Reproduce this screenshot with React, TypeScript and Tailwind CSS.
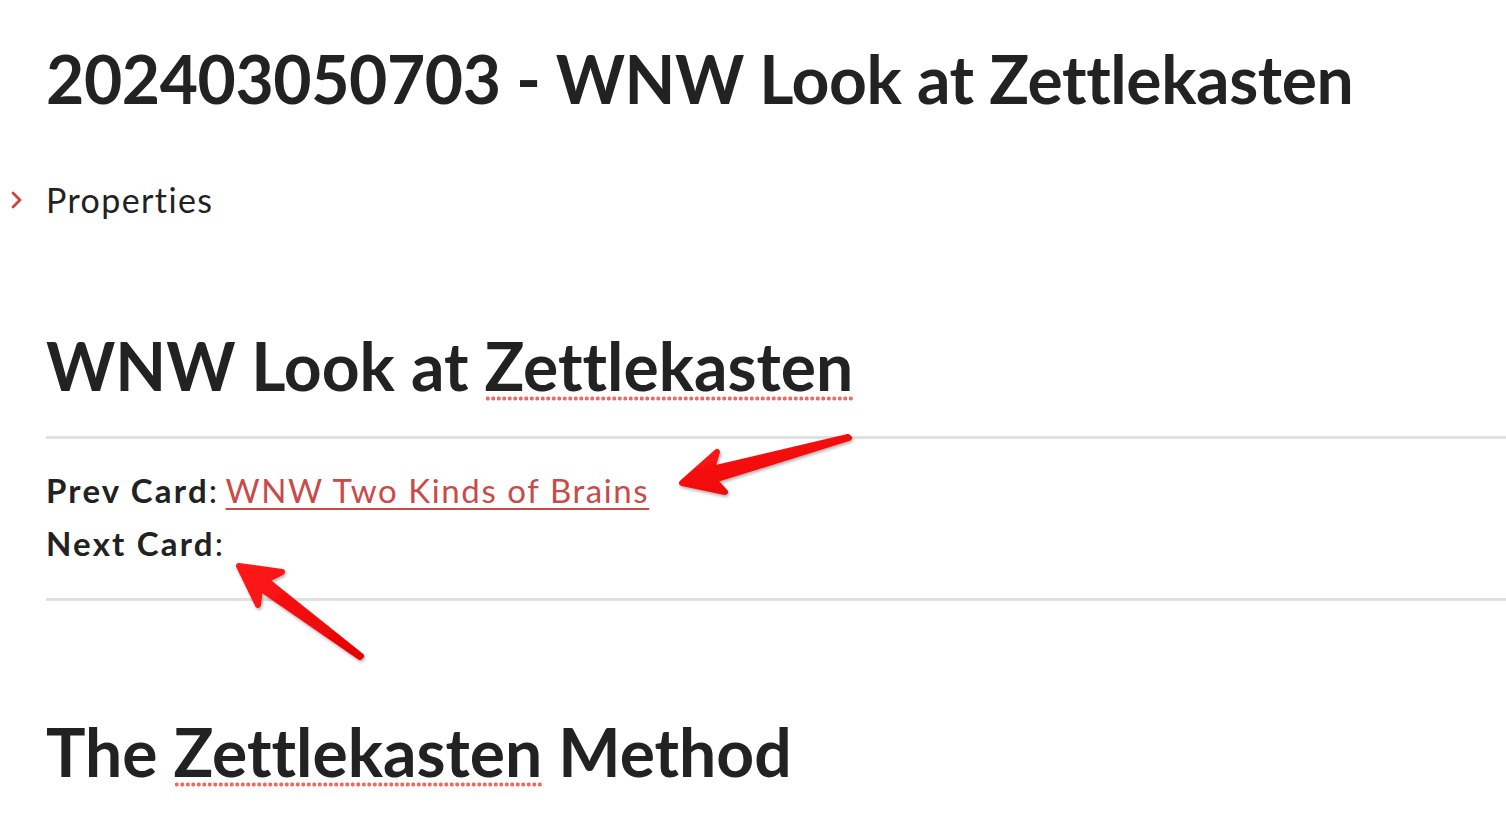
import React from "react";

const FONT = "font-['Lato','Noto_Sans',sans-serif] [font-variant-ligatures:none]";

function Arrow({ points }: { points: string }) {
  return (
    <polygon
      points={points}
      fill="url(#arrowFill)"
      stroke="url(#arrowFill)"
      strokeWidth={6}
      strokeLinejoin="round"
      filter="url(#arrowShadow)"
    />
  );
}

function Annotations() {
  return (
    <svg
      className="pointer-events-none absolute left-0 top-0"
      width={1506}
      height={834}
      viewBox="0 0 1506 834"
    >
      <defs>
        <linearGradient id="arrowFill" x1="0" y1="0" x2="1" y2="1">
          <stop offset="0" stopColor="#ff1a1a" />
          <stop offset="1" stopColor="#e60000" />
        </linearGradient>
        <filter id="arrowShadow" x="-20%" y="-20%" width="140%" height="140%">
          <feDropShadow dx="1" dy="2" stdDeviation="1.5" floodColor="#000" floodOpacity="0.3" />
        </filter>
      </defs>
      {/* arrow pointing at the prev card link */}
      <Arrow points="682,483 717,452 712,469 848,437 849,438 714,480 725,492" />
      {/* arrow pointing at next card */}
      <Arrow points="239,566 282,572 266,580 361,656 360,657 260,588 258,605" />
    </svg>
  );
}

// spellcheck squiggle, drawn as a row of dots under the word
function Misspelled({ children }: { children: React.ReactNode }) {
  return (
    <span className="relative inline-block">
      {children}
      <span className="absolute left-0 right-0 top-[70px] h-[5px] bg-[radial-gradient(circle,#f2675f_1.8px,transparent_2.3px)] bg-[length:5.5px_5px] bg-repeat-x" />
    </span>
  );
}

export default function App() {
  return (
    <div className={`relative h-[834px] w-[1506px] overflow-hidden bg-white text-[#222222] ${FONT}`}>
      <div className="pl-[46px] pt-[39px]">
        <h1 className="text-[66px] font-bold leading-[80px] tracking-[-0.4px]">
          202403050703 - WNW Look at Zettlekasten
        </h1>

        <div className="mt-[61px] flex items-center">
          <svg className="-ml-[38px] mr-[21px]" width="17" height="20" viewBox="0 0 17 20">
            <polyline
              points="5,3 12,10 5,17"
              fill="none"
              stroke="#d0433c"
              strokeWidth="2.8"
              strokeLinecap="round"
              strokeLinejoin="round"
            />
          </svg>
          <span className="text-[34px] leading-[40px] tracking-[1.4px]">Properties</span>
        </div>

        <h2 className="mt-[106px] text-[66px] font-bold leading-[80px]">
          WNW Look at <Misspelled>Zettlekasten</Misspelled>
        </h2>

        <hr className="mt-[30px] border-0 h-[3px] bg-[#e1e1e1]" />

        <div className="mt-[25px] text-[33px] leading-[53px]">
          <p>
            <span className="font-bold tracking-[2.2px]">Prev Card</span>:{" "}
            <a
              href="#"
              className="text-[#c94b48] tracking-[1.6px] underline decoration-2 underline-offset-[5px]"
            >
              WNW Two Kinds of Brains
            </a>
          </p>
          <p>
            <span className="font-bold tracking-[2.2px]">Next Card</span>:
          </p>
        </div>

        <hr className="mt-[28px] border-0 h-[3px] bg-[#e1e1e1]" />

        <h2 className="mt-[111px] text-[66px] font-bold leading-[80px]">
          The <Misspelled>Zettlekasten</Misspelled> Method
        </h2>
      </div>

      <Annotations />
    </div>
  );
}
